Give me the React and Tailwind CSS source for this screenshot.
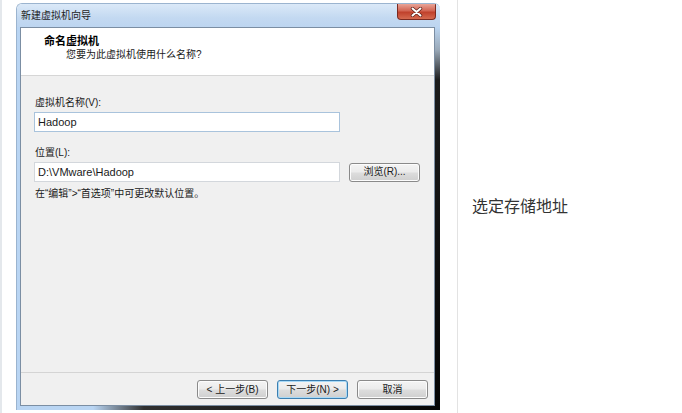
import React from 'react';

const font = "font-['Liberation_Sans','Noto_Sans_CJK_SC',sans-serif]";

const WinButton = ({ children, focused, className = '' }) => (
  <div
    className={`h-[19px] w-[71px] flex items-center justify-center rounded-[3px] border text-[10px] leading-none text-[#1a1a1a] bg-[linear-gradient(to_bottom,#f4f4f4_0%,#ebebeb_48%,#dddddd_52%,#cfcfcf_100%)] ${
      focused ? 'border-[#3c7fb1] shadow-[inset_0_0_0_1px_#a8d9f6]' : 'border-[#8a8a8a] shadow-[inset_0_0_0_1px_#fcfcfc]'
    } ${className}`}
  >
    {children}
  </div>
);

const CloseIcon = () => (
  <svg width="13" height="10" viewBox="0 0 13 10">
    <path d="M2.5 1.5 L10.5 8.5 M10.5 1.5 L2.5 8.5" stroke="#5a1e16" strokeWidth="3.4" strokeLinecap="round" />
    <path d="M2.5 1.5 L10.5 8.5 M10.5 1.5 L2.5 8.5" stroke="#ffffff" strokeWidth="2" strokeLinecap="round" />
  </svg>
);

const Wizard = () => (
  <div className="w-[424px] h-[407px] flex flex-col rounded-t-[6px] overflow-hidden border-t border-l border-[#9bb4cf]">
    {/* title bar */}
    <div className="h-[23px] flex justify-between items-start bg-[linear-gradient(to_bottom,#dbe9f8,#c3d9f1_60%,#bdd5f0)]">
      <span className="pl-[4px] pt-[6px] text-[10px] leading-[12px] text-[#1e1e1e]">新建虚拟机向导</span>
      <div className="mr-[4px] w-[39px] h-[16px] flex items-center justify-center rounded-b-[4px] border border-t-0 border-[#7b2a20] bg-[linear-gradient(to_bottom,#e9a497_0%,#d26553_45%,#c0412c_55%,#d56a50_100%)]">
        <CloseIcon />
      </div>
    </div>

    <div className="flex-1 flex">
      <div className="w-[3px] bg-[#b9d5f3]" />
      {/* client area */}
      <div className="flex-1 flex flex-col border border-[#7b8ea3] bg-[#f0f0f0]">
        <div className="h-[48px] bg-white border-b border-[#d6d6d6]">
          <p className="pl-[23px] pt-[7px] text-[11px] leading-[12px] font-bold text-black">命名虚拟机</p>
          <p className="pl-[45px] mt-[2px] text-[10px] leading-[12px] text-[#1a1a1a]">您要为此虚拟机使用什么名称?</p>
        </div>

        <div className="pl-[13px] pt-[21px] text-[10px] leading-[12px] text-[#1a1a1a]">
          <p className="pl-[1px]">虚拟机名称(V):</p>
          <div className="mt-[3px] w-[306px] h-[20px] flex items-center pl-[3px] bg-white border border-[#a9c3dc] text-[11px]">
            Hadoop
          </div>

          <p className="pl-[1px] mt-[15px]">位置(L):</p>
          <div className="mt-[3px] flex items-center gap-[9px]">
            <div className="w-[306px] h-[20px] flex items-center pl-[3px] bg-white border border-[#d3d7dc] text-[11px]">
              D:\VMware\Hadoop
            </div>
            <WinButton>浏览(R)...</WinButton>
          </div>

          <p className="pl-[1px] mt-[6px]">在“编辑”&gt;“首选项”中可更改默认位置。</p>
        </div>

        <div className="mt-auto h-[33px] border-t border-[#d4d4d4] flex justify-end items-start gap-[9px] pt-[7px] pr-[6px]">
          <WinButton>&lt; 上一步(B)</WinButton>
          <WinButton focused>下一步(N) &gt;</WinButton>
          <WinButton>取消</WinButton>
        </div>
      </div>
      <div className="w-[5px] bg-[linear-gradient(to_bottom,#bcd6f2_0%,#9aa9b8_6%,#1c1c1c_14%,#050505_100%)]" />
    </div>
    <div className="h-[4px] bg-[linear-gradient(to_right,#b9d5f3_0%,#b9d5f3_18%,#303030_30%,#050505_100%)]" />
  </div>
);

export default function App() {
  return (
    <div className={`w-[682px] h-[413px] bg-white flex ${font}`}>
      <div className="w-[2px] bg-[#e4e8ec]" />
      <div className="pl-[14px] pt-[3px]">
        <Wizard />
      </div>
      <div className="ml-[17px] w-px bg-[#e3e3e3]" />
      <div className="pl-[14px] flex items-center">
        <span className="text-[16px] text-[#333333]">选定存储地址</span>
      </div>
    </div>
  );
}
